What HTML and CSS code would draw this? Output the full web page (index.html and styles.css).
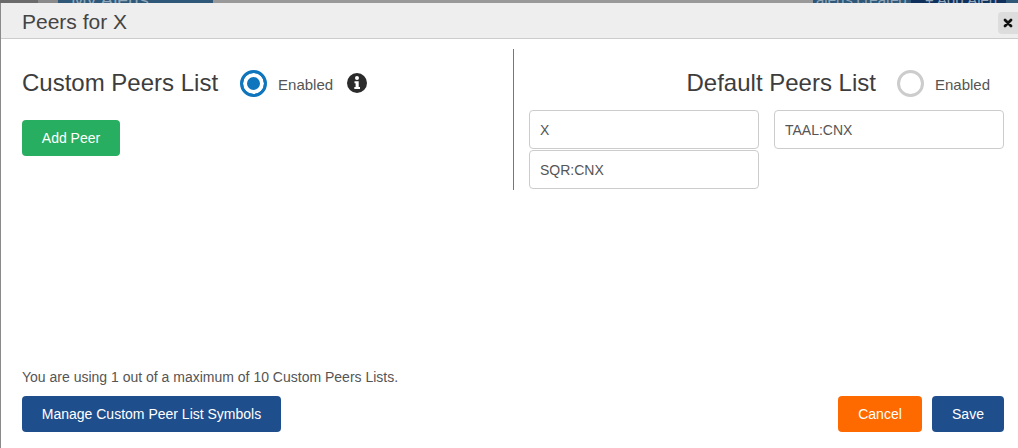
FILE: index.html
```html
<!DOCTYPE html>
<html lang="en">
<head>
  <meta charset="UTF-8" />
  <title>Peers for X</title>
  <link rel="stylesheet" href="styles.css">
</head>
<body>
  <div class="backdrop">
    <div class="backdrop-left"></div>
    <div class="backdrop-tab">My Alerts</div>
    <div class="backdrop-right">
      <span class="backdrop-note">alerts created</span>
      <span class="backdrop-add">+ Add Alert</span>
    </div>
  </div>

  <div class="modal">
    <div class="modal-header">
      <div class="modal-title">Peers for X</div>
      <button class="close-btn" aria-label="Close">
        <svg width="10" height="10" viewBox="0 0 10 10">
          <path d="M2 2 L8 8 M8 2 L2 8" stroke="#111" stroke-width="2.8" stroke-linecap="round" />
        </svg>
      </button>
    </div>

    <div class="modal-body">
      <div class="lists">
        <div class="custom-col">
          <div class="list-head">
            <span class="list-title">Custom Peers List</span>
            <span class="radio radio-on"></span>
            <span class="radio-label">Enabled</span>
            <svg class="info-icon" width="20" height="20" viewBox="0 0 20 20">
              <circle cx="10" cy="10" r="10" fill="#2b2b2b" />
              <circle cx="10" cy="5" r="2" fill="#fff" />
              <path d="M7.5 8.2 H11.7 V14 H13 V16 H7.3 V14 H8.6 V10.2 H7.5 Z" fill="#fff" />
            </svg>
          </div>
          <button class="btn btn-green">Add Peer</button>
        </div>

        <div class="default-col">
          <div class="list-head list-head-right">
            <span class="list-title">Default Peers List</span>
            <span class="radio"></span>
            <span class="radio-label">Enabled</span>
          </div>
          <div class="peer-grid">
            <input class="peer-input" type="text" value="X" readonly>
            <input class="peer-input" type="text" value="TAAL:CNX" readonly>
            <input class="peer-input" type="text" value="SQR:CNX" readonly>
          </div>
        </div>
      </div>

      <div class="modal-foot">
        <p class="usage">You are using 1 out of a maximum of 10 Custom Peers Lists.</p>
        <div class="foot-row">
          <button class="btn btn-blue btn-manage">Manage Custom Peer List Symbols</button>
          <div class="foot-actions">
            <button class="btn btn-orange">Cancel</button>
            <button class="btn btn-blue">Save</button>
          </div>
        </div>
      </div>
    </div>
  </div>
</body>
</html>
```

FILE: styles.css
```css
* {
  box-sizing: border-box;
}

html,
body {
  height: 100%;
}

body {
  margin: 0;
  background-color: #fff;
  font-family: "Liberation Sans", Arial, sans-serif;
  color: #333;
  overflow: hidden;
  display: flex;
  flex-direction: column;
}

/* page behind the modal, only a sliver shows */
.backdrop {
  height: 3px;
  flex: none;
  background-color: #999;
  display: flex;
  overflow: hidden;
  font-size: 19px;
  color: #8fa6ba;
}

.backdrop-left {
  width: 58px;
  height: 3px;
  background: linear-gradient(to right, #6b6b6b 38px, #8a8a8a 38px);
}

.backdrop-tab {
  width: 155px;
  height: 3px;
  background-color: #2f5878;
  padding-left: 13px;
  line-height: 0;
}

.backdrop-right {
  display: flex;
  width: 205px;
  height: 3px;
  margin-left: auto;
  background-color: #2f5878;
  line-height: 0;
  font-size: 15px;
}

.backdrop-note {
  width: 98px;
  padding-left: 3px;
  white-space: nowrap;
}

.backdrop-add {
  width: 95px;
  padding-left: 14px;
  background-color: #10305c;
  white-space: nowrap;
}

.modal {
  flex: 1;
  display: flex;
  flex-direction: column;
  min-height: 0;
  border-left: 1px solid #8a8a8a;
}

.modal-header {
  height: 36px;
  flex: none;
  display: flex;
  align-items: center;
  justify-content: space-between;
  padding-left: 21px;
  background-color: #eee;
  border-bottom: 1px solid #ccc;
}

.modal-title {
  padding-top: 2px;
  font-size: 21px;
  color: #444;
}

.close-btn {
  width: 20px;
  height: 22px;
  margin-top: 4px;
  padding: 0;
  border: none;
  border-radius: 4px 0 0 4px;
  background-color: #ddd;
  display: flex;
  align-items: center;
  justify-content: center;
}

.modal-body {
  flex: 1;
  display: flex;
  flex-direction: column;
  justify-content: space-between;
  padding: 10px 14px 16px 21px;
  min-height: 0;
}

.lists {
  display: flex;
}

.custom-col {
  width: 492px;
  height: 141px;
  border-right: 1px solid #777;
  padding-top: 20px;
}

.default-col {
  flex: 1;
  padding-left: 15px;
  padding-top: 20px;
}

.list-head {
  display: flex;
  align-items: center;
  height: 28px;
}

.list-head-right {
  justify-content: flex-end;
  padding-right: 14px;
}

.list-title {
  font-size: 24px;
  color: #3d3d3d;
}

.radio {
  width: 27px;
  height: 27px;
  margin-left: 22px;
  border: 3px solid #ccc;
  border-radius: 50%;
  flex: none;
}

.radio-on {
  border-color: #0f75bc;
  background-color: #0f75bc;
  box-shadow: inset 0 0 0 4px #fff;
}

.radio-label {
  margin-left: 11px;
  padding-top: 3px;
  font-size: 15px;
  color: #555;
}

.list-head-right .radio {
  margin-left: 21px;
}

.info-icon {
  margin-left: 14px;
  flex: none;
}

.btn {
  height: 36px;
  padding: 0;
  border: none;
  border-radius: 4px;
  color: #fff;
  font-family: "Liberation Sans", Arial, sans-serif;
  font-size: 14px;
  font-weight: 400;
  white-space: nowrap;
}

.btn-green {
  width: 98px;
  margin-top: 23px;
  background-color: #27ae60;
}

.btn-blue {
  background-color: #1f4e8c;
}

.btn-orange {
  background-color: #ff6a00;
}

.btn-manage {
  width: 259px;
}

.peer-grid {
  display: grid;
  grid-template-columns: 230px 230px;
  column-gap: 15px;
  row-gap: 1px;
  margin-top: 13px;
}

.peer-input {
  height: 39px;
  width: 100%;
  padding: 0 10px;
  border: 1px solid #ccc;
  border-radius: 4px;
  outline: none;
  font-family: "Liberation Sans", Arial, sans-serif;
  font-size: 14px;
  color: #555;
}

.usage {
  margin: 0 0 11px;
  font-size: 14px;
  line-height: 16px;
  color: #555;
}

.foot-row {
  display: flex;
  align-items: center;
  justify-content: space-between;
}

.foot-actions {
  display: flex;
  gap: 10px;
}

.foot-actions .btn-orange {
  width: 84px;
}

.foot-actions .btn-blue {
  width: 72px;
}
```
